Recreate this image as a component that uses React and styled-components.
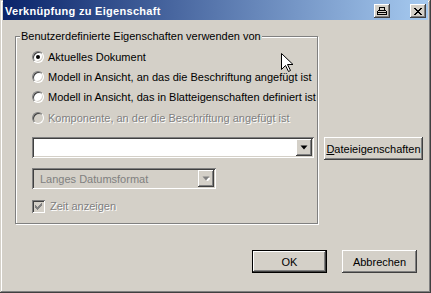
import React from "react";
import styled, { createGlobalStyle, css } from "styled-components";

const GlobalStyle = createGlobalStyle`
  html, body { margin: 0; padding: 0; background: #d4d0c8; }
  body { font-family: "Liberation Sans", Arial, sans-serif; font-size: 11px; color: #000; }
  * { box-sizing: border-box; }
`;

const raised = css`
  background: #d4d0c8;
  box-shadow: inset -1px -1px #404040, inset 1px 1px #fff, inset -2px -2px #808080, inset 2px 2px #d4d0c8;
`;

const sunken = css`
  box-shadow: inset 1px 1px #808080, inset -1px -1px #fff, inset 2px 2px #404040, inset -2px -2px #d4d0c8;
`;

const Window = styled.div`
  position: relative;
  width: 431px;
  height: 293px;
  padding: 0 3px 3px 3px;
  background: #d4d0c8;
  box-shadow: inset -1px -1px #404040, inset 1px 1px #d4d0c8, inset -2px -2px #808080, inset 2px 2px #fff;
  display: flex;
  flex-direction: column;
`;

const TitleBar = styled.div`
  height: 20px;
  flex: none;
  display: flex;
  align-items: center;
  padding: 0 2px 0 2px;
  background: linear-gradient(to right, #0a246a, #a6caf0);
`;

const Title = styled.div`
  flex: 1;
  color: #fff;
  font-weight: bold;
  font-size: 11px;
  letter-spacing: 0.3px;
  white-space: nowrap;
  padding-top: 1px;
`;

const CaptionButton = styled.div`
  ${raised};
  width: 16px;
  height: 14px;
  flex: none;
  margin-left: ${(p) => p.$gap || 0}px;
  margin-top: 2px;
  display: flex;
  align-items: center;
  justify-content: center;
`;

const Body = styled.div`
  flex: 1;
  display: flex;
  flex-direction: column;
  padding: 10px 5px 0 12px;
`;

const MainRow = styled.div`
  display: flex;
  align-items: flex-start;
`;

const GroupBox = styled.fieldset`
  flex: none;
  width: 303px;
  margin: 0;
  padding: 4px 0 10px 16px;
  border: 1px solid #808080;
  box-shadow: inset 1px 1px #fff, 1px 1px #fff;
  display: flex;
  flex-direction: column;
  min-width: 0;
`;

const GroupLegend = styled.legend`
  margin-left: -12px;
  padding: 0 1px;
  line-height: 13px;
  background: #d4d0c8;
  white-space: nowrap;
`;

const RadioRow = styled.div`
  height: 20px;
  display: flex;
  align-items: center;
  gap: 4px;
  margin-top: ${(p) => p.$extra || 0}px;
`;

const RadioCircle = styled.span`
  width: 12px;
  height: 12px;
  flex: none;
  border-radius: 50%;
  border: 1px solid;
  border-color: #808080 #fff #fff #808080;
  background: ${(p) => (p.$disabled ? "#d4d0c8" : "#fff")};
  box-shadow: inset 1px 1px #404040, inset -1px -1px #d4d0c8;
  display: flex;
  align-items: center;
  justify-content: center;
  &::after {
    content: "";
    width: 4px;
    height: 4px;
    border-radius: 50%;
    background: #000;
    display: ${(p) => (p.$checked ? "block" : "none")};
  }
`;

const Label = styled.span`
  white-space: nowrap;
  line-height: 13px;
  color: ${(p) => (p.$disabled ? "#808080" : "#000")};
  text-shadow: ${(p) => (p.$disabled ? "1px 1px 0 #fff" : "none")};
`;

const Combo = styled.div`
  width: ${(p) => p.$width}px;
  height: 21px;
  padding: 2px;
  margin-top: ${(p) => p.$top || 0}px;
  background: ${(p) => (p.$disabled ? "#d4d0c8" : "#fff")};
  ${sunken};
  display: flex;
  align-items: stretch;
`;

const ComboText = styled.div`
  flex: 1;
  display: flex;
  align-items: center;
  padding-left: 6px;
  white-space: nowrap;
  color: ${(p) => (p.$disabled ? "#808080" : "#000")};
`;

const DropButton = styled.div`
  ${raised};
  width: 16px;
  height: 17px;
  flex: none;
  display: flex;
  align-items: center;
  justify-content: center;
`;

const CheckRow = styled.div`
  display: flex;
  align-items: center;
  gap: 5px;
  height: 13px;
  margin-top: 11px;
`;

const CheckBox = styled.span`
  width: 13px;
  height: 13px;
  flex: none;
  background: #d4d0c8;
  ${sunken};
  display: flex;
  align-items: center;
  justify-content: center;
`;

const SideColumn = styled.div`
  flex: none;
  padding-top: 107px;
  margin-left: 6px;
`;

const PushButton = styled.button`
  ${raised};
  flex: none;
  width: ${(p) => p.$width}px;
  height: 23px;
  border: none;
  padding: 0;
  margin: 0;
  font-family: "Liberation Sans", Arial, sans-serif;
  font-size: 11px;
  color: #000;
  display: flex;
  align-items: center;
  justify-content: center;
  ${(p) =>
    p.$default &&
    css`
      box-shadow: inset 0 0 0 1px #000, inset -2px -2px #404040, inset 2px 2px #fff,
        inset -3px -3px #808080, inset 3px 3px #d4d0c8;
    `}
  u { text-decoration: underline; text-underline-offset: 1px; }
`;

const ButtonRow = styled.div`
  display: flex;
  justify-content: flex-end;
  gap: 15px;
  margin-top: 26px;
  margin-right: 6px;
`;

const Cursor = styled.svg`
  position: absolute;
  left: 281px;
  top: 53px;
`;

const Arrow = ({ disabled }) => (
  <svg width="8" height="5" viewBox="0 0 8 5">
    {disabled && <path d="M2 2h7L5.5 5.5z" fill="#fff" />}
    <path d="M0.5 0.5h7L4 4.5z" fill={disabled ? "#808080" : "#000"} />
  </svg>
);

export default function App() {
  return (
    <>
      <GlobalStyle />
      <Window>
        <TitleBar>
          <Title>Verknüpfung zu Eigenschaft</Title>
          <CaptionButton>
            <svg width="10" height="8" viewBox="0 0 10 8" shapeRendering="crispEdges">
              <path d="M2 0h6v1H2zM2 0h1v3H2zM7 0h1v3H7z" fill="#000" />
              <path d="M1 3h8v1H1zM0 4h1v4H0zM9 4h1v4H9zM0 7h10v1H0zM1 5h8v1H1z" fill="#000" />
            </svg>
          </CaptionButton>
          <CaptionButton $gap={20}>
            <svg width="8" height="7" viewBox="0 0 8 7" shapeRendering="crispEdges">
              <path d="M0 0h2v1h1v1h2V1h1V0h2v1H7v1H6v1H5v1h1v1h1v1h1v1H6V6H5V5H3v1H2v1H0V6h1V5h1V4h1V3H2V2H1V1H0z" fill="#000" />
            </svg>
          </CaptionButton>
        </TitleBar>
        <Body>
          <MainRow>
            <GroupBox>
              <GroupLegend>Benutzerdefinierte Eigenschaften verwenden von</GroupLegend>
              <RadioRow>
                <RadioCircle $checked />
                <Label>Aktuelles Dokument</Label>
              </RadioRow>
              <RadioRow>
                <RadioCircle />
                <Label>Modell in Ansicht, an das die Beschriftung angefügt ist</Label>
              </RadioRow>
              <RadioRow>
                <RadioCircle />
                <Label>Modell in Ansicht, das in Blatteigenschaften definiert ist</Label>
              </RadioRow>
              <RadioRow $extra={1}>
                <RadioCircle $disabled />
                <Label $disabled>Komponente, an der die Beschriftung angefügt ist</Label>
              </RadioRow>
              <Combo $width={282} $top={9}>
                <ComboText />
                <DropButton>
                  <Arrow />
                </DropButton>
              </Combo>
              <Combo $width={184} $top={10} $disabled>
                <ComboText $disabled>Langes Datumsformat</ComboText>
                <DropButton>
                  <Arrow disabled />
                </DropButton>
              </Combo>
              <CheckRow>
                <CheckBox>
                  <svg width="7" height="7" viewBox="0 0 7 7" shapeRendering="crispEdges">
                    <path d="M6 0h1v3H6zM5 1h1v3H5zM4 2h1v3H4zM3 3h1v3H3zM2 4h1v3H2zM1 3h1v3H1zM0 2h1v3H0z" fill="#808080" />
                  </svg>
                </CheckBox>
                <Label $disabled>Zeit anzeigen</Label>
              </CheckRow>
            </GroupBox>
            <SideColumn>
              <PushButton $width={99}>
                <span>
                  <u>D</u>ateieigenschaften
                </span>
              </PushButton>
            </SideColumn>
          </MainRow>
          <ButtonRow>
            <PushButton $width={75} $default>OK</PushButton>
            <PushButton $width={75}>Abbrechen</PushButton>
          </ButtonRow>
        </Body>
        <Cursor width="12" height="19" viewBox="0 0 12 19">
          <path d="M0.5 0.5v16l4-4 3 6 2-1-3-6h5.5z" fill="#fff" stroke="#000" strokeWidth="1" />
        </Cursor>
      </Window>
    </>
  );
}
